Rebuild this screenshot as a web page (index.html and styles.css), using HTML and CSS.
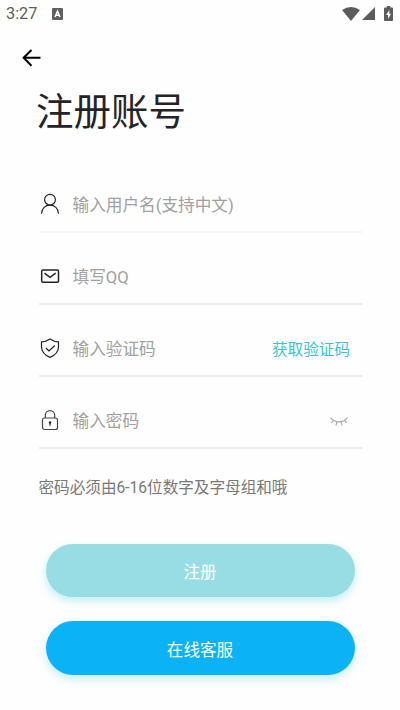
FILE: index.html
```html
<!DOCTYPE html>
<html lang="zh-CN">
<head>
<meta charset="UTF-8" />
<meta name="viewport" content="width=device-width, initial-scale=1" />
<title>注册账号</title>
<link rel="stylesheet" href="styles.css">
</head>
<body>

<div class="statusBar">
  <span class="time">3:27</span>
  <svg class="appIcon" width="11" height="12" viewBox="0 0 11 12">
    <rect width="11" height="12" rx="1.2" fill="#606060" />
    <path d="M3 9 5.5 3.2 8 9M4 7.3h3" fill="none" stroke="#fff" stroke-width="1.5" />
  </svg>
  <svg class="wifi" width="18" height="14" viewBox="0 0 18 14">
    <path d="M0 3Q9-3 18 3L9 14Z" fill="#5c5c5c" />
  </svg>
  <svg class="signal" width="13" height="13" viewBox="0 0 13 13">
    <path d="M13 0V13H0Z" fill="#5c5c5c" />
  </svg>
  <svg class="battery" width="9" height="15" viewBox="0 0 9 15">
    <path d="M2.7 0h3.6v1.6H8q1 0 1 1V14q0 1-1 1H1q-1 0-1-1V2.6q0-1 1-1h1.7Z" fill="#5c5c5c" />
    <path d="M5.3 4 2 9h2v4l3-5.2H5.3Z" fill="#fff" />
  </svg>
</div>

<header class="header">
  <svg class="back" width="20" height="20" viewBox="0 0 20 20">
    <path d="M9.5 2 1.6 9.8l7.9 7.9M1.6 9.8H18.5" fill="none" stroke="#000" stroke-width="2" />
  </svg>
  <h1 class="title">注册账号</h1>
</header>

<main class="form">
  <div class="field">
    <svg class="icon" width="22" height="22" viewBox="0 0 22 22">
      <circle cx="11" cy="6.7" r="5.4" />
      <path d="M2.5 20.8C2.6 15.3 6.5 12.1 11 12.1s8.4 3.2 8.5 8.7" />
    </svg>
    <span class="placeholder">输入用户名(支持中文)</span>
  </div>

  <div class="field">
    <svg class="icon iconBold" width="22" height="22" viewBox="0 0 22 22">
      <rect x="2.7" y="5" width="16.8" height="12.2" rx="1.3" />
      <path d="M5.5 8.2 11 12.3l5.7-4.1" />
    </svg>
    <span class="placeholder">填写QQ</span>
  </div>

  <div class="field">
    <svg class="icon" width="22" height="22" viewBox="0 0 22 22">
      <path d="M11 2Q15 4.8 19.5 4.8V10Q19.3 17 11 20.4 2.7 17 2.5 10V4.8Q7 4.8 11 2Z" />
      <path d="M6.8 11 10 14l5.8-5.5" />
    </svg>
    <span class="placeholder">输入验证码</span>
    <span class="getCode">获取验证码</span>
  </div>

  <div class="field">
    <svg class="icon lock" width="22" height="22" viewBox="0 0 22 22">
      <rect x="3.5" y="9" width="15" height="11.5" rx="2" />
      <path d="M6.3 9V6.3a4.7 4.7 0 0 1 9.4 0V9" />
      <path d="M11 14v2.8" stroke-width="1.4" />
      <circle cx="11" cy="13.5" r="1.2" fill="#222" stroke="none" />
    </svg>
    <span class="placeholder">输入密码</span>
    <svg class="eye" width="18" height="10" viewBox="0 0 18 10">
      <path d="M.6.7Q3.7 4.9 9 4.9T17.4.7M3.3 3.6 1.2 5.9M6.9 4.8 5.9 8.6M11.1 4.8l1 3.8M14.7 3.6l2.1 2.3" />
    </svg>
  </div>

  <p class="hint">密码必须由6-16位数字及字母组和哦</p>

  <div class="buttons">
    <button class="btn btnRegister">注册</button>
    <button class="btn btnService">在线客服</button>
  </div>
</main>

</body>
</html>
```

FILE: styles.css
```css
* {
  box-sizing: border-box;
}

body {
  margin: 0;
  height: 710px;
  background-color: #fefefe;
  font-family: Roboto, "Noto Sans CJK SC", sans-serif;
  overflow: hidden;
}

.statusBar {
  display: flex;
  align-items: center;
  height: 27px;
  padding: 0 7px 0 6px;
}

.time {
  width: 46px;
  font-size: 16.3px;
  line-height: 27px;
  color: #5c5c5c;
}

.wifi {
  margin-left: auto;
}

.signal {
  margin-left: 2px;
}

.battery {
  margin-left: 9px;
}

.header {
  height: 149px;
  padding: 21px 0 0 22px;
}

.back {
  display: block;
}

.title {
  margin: 16px 0 0 14px;
  font-size: 37.5px;
  font-weight: 400;
  line-height: 56px;
  color: #242426;
}

.form {
  padding: 0 38.5px;
}

.field {
  display: flex;
  align-items: center;
  height: 57px;
  margin-bottom: 15px;
  border-bottom: 2px solid #ebebeb;
}

.field:first-child {
  border-bottom-color: #f4f4f4;
}

.icon {
  margin-right: 12px;
  fill: none;
  stroke: #222;
  stroke-width: 1.2;
}

.iconBold {
  stroke-width: 1.5;
}

.lock {
  stroke: #444;
}

.placeholder {
  padding-top: 4px;
  font-size: 16.65px;
  line-height: 24px;
  color: #a0a0a0;
}

.getCode {
  margin-left: auto;
  margin-right: 11.5px;
  padding-top: 4px;
  font-size: 15.6px;
  line-height: 24px;
  color: #3cc3d3;
}

.eye {
  margin: 5px 13.5px 0 auto;
  fill: none;
  stroke: #aaa;
  stroke-width: 1.2;
}

.hint {
  margin: 27px 0 0;
  font-size: 15.6px;
  line-height: 24px;
  white-space: nowrap;
  color: #787878;
}

.buttons {
  display: flex;
  flex-direction: column;
  gap: 24px;
  padding: 43.5px 7px 0;
}

.btn {
  height: 53.5px;
  padding: 2px 0 0;
  border: 0;
  border-radius: 27px;
  font-family: inherit;
  font-size: 16.6px;
  color: #fff;
  box-shadow: 0 4px 8px rgba(80, 208, 222, 0.35);
}

.btnRegister {
  background-color: #98dde4;
}

.btnService {
  background-color: #0cb2f6;
}
```
